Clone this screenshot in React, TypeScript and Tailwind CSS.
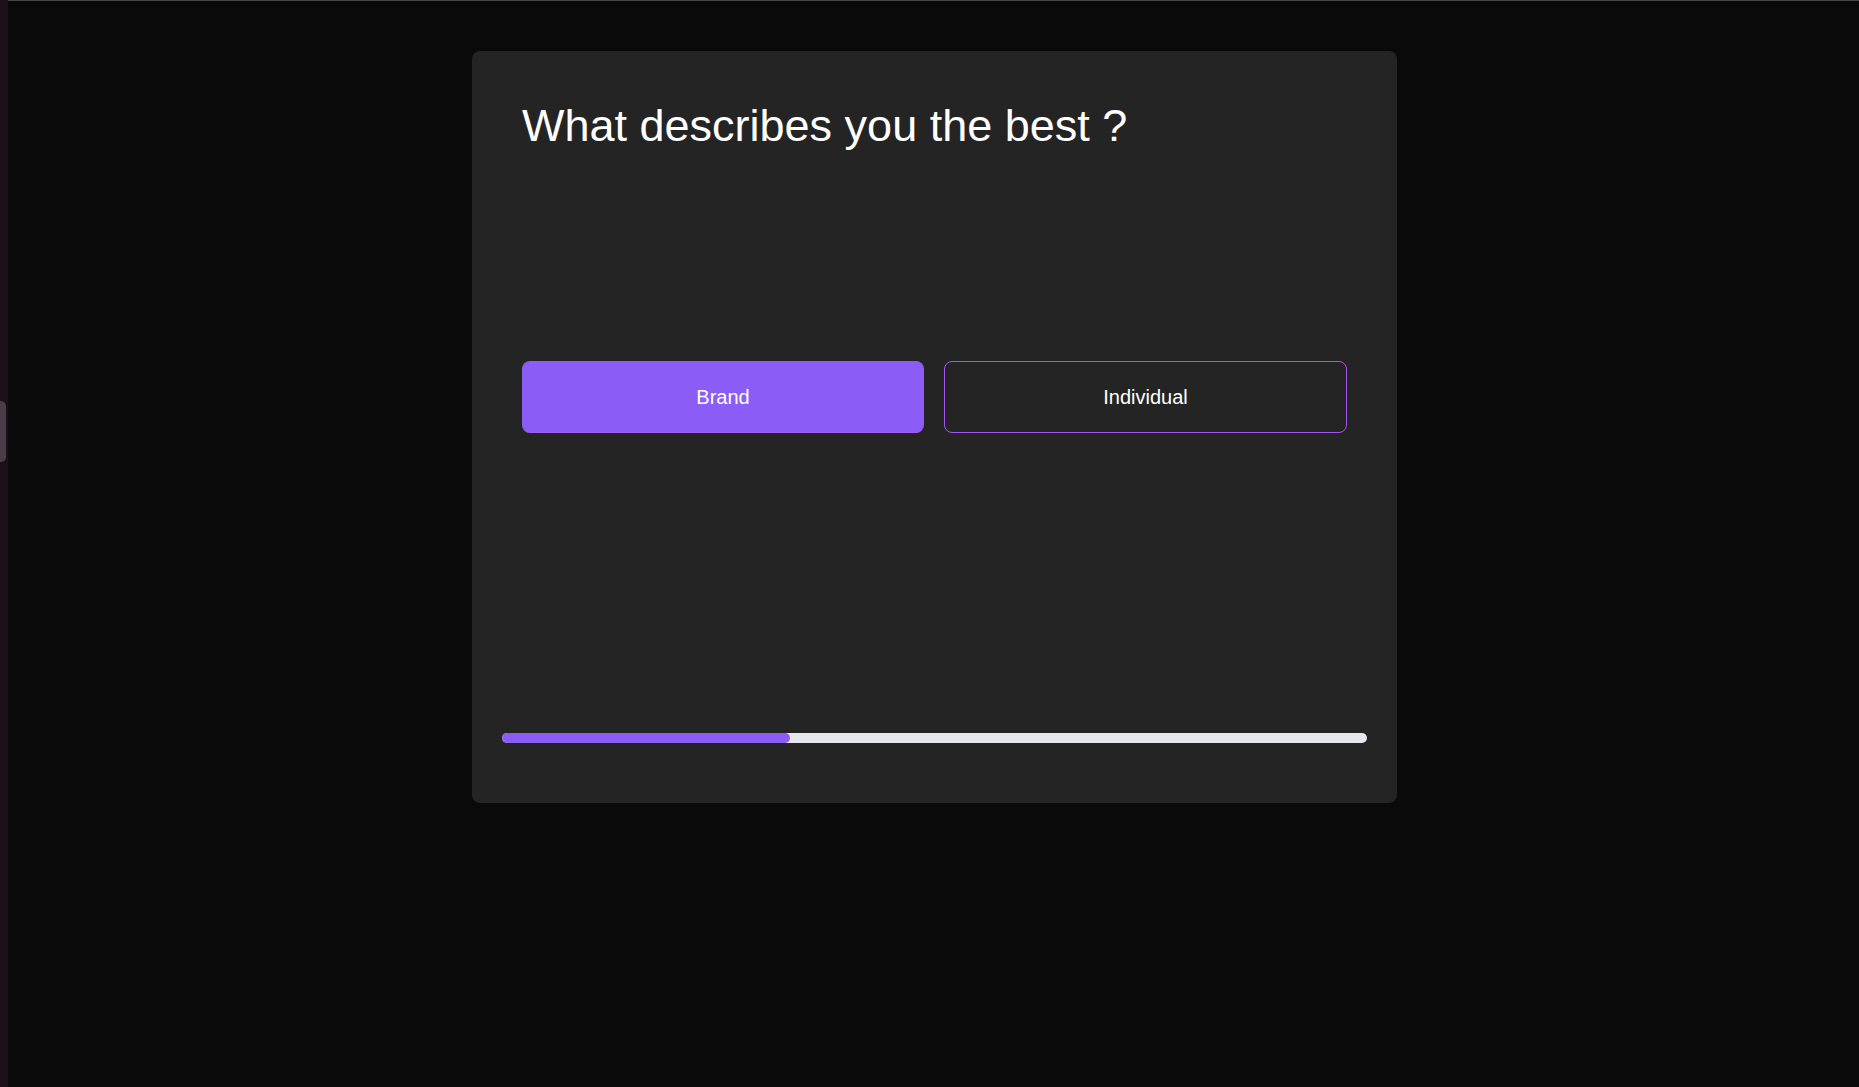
import { useState } from "react";

const OPTIONS = ["Brand", "Individual"];

export default function App() {
  const [choice, setChoice] = useState("Brand");
  const step = 1;
  const total = 3;

  return (
    <div className="flex min-h-screen w-full bg-[#0a0a0a] font-['Liberation_Sans',Arial,sans-serif] text-white">
      {/* side rail */}
      <div className="relative w-[8px] shrink-0 bg-[#1b0f19]">
        <div className="absolute left-0 top-[401px] h-[61px] w-[6px] rounded-r-[5px] bg-[#4a3c48]" />
      </div>

      <div className="flex flex-1 flex-col border-t border-[#474747]">
        <div className="flex justify-center pt-[50px] pl-[2px]">
          <div className="flex w-[925px] flex-col rounded-lg bg-[#242424] px-[50px] pt-[50px] pb-[60px]">
            <h1 className="text-[45px] font-normal leading-[50px]">What describes you the best ?</h1>

            <div className="mt-[210px] grid grid-cols-[402px_403px] gap-[20px]">
              {OPTIONS.map((o) => (
                <button
                  key={o}
                  onClick={() => setChoice(o)}
                  className={
                    o === choice
                      ? "h-[72px] rounded-lg border border-[#8b5cf6] border-b-[#a55cf7] bg-[#8b5cf6] text-[20px] text-white"
                      : "h-[72px] rounded-lg border border-[#a855f7] bg-transparent text-[20px] text-white"
                  }
                >
                  {o}
                </button>
              ))}
            </div>

            <div className="mx-[-20px] mt-[300px] h-[10px] rounded-full bg-[#e5e7eb]">
              <div
                className="h-full rounded-full bg-[#8b5cf6]"
                style={{ width: `${(step / total) * 100}%` }}
              />
            </div>
          </div>
        </div>
      </div>
    </div>
  );
}
